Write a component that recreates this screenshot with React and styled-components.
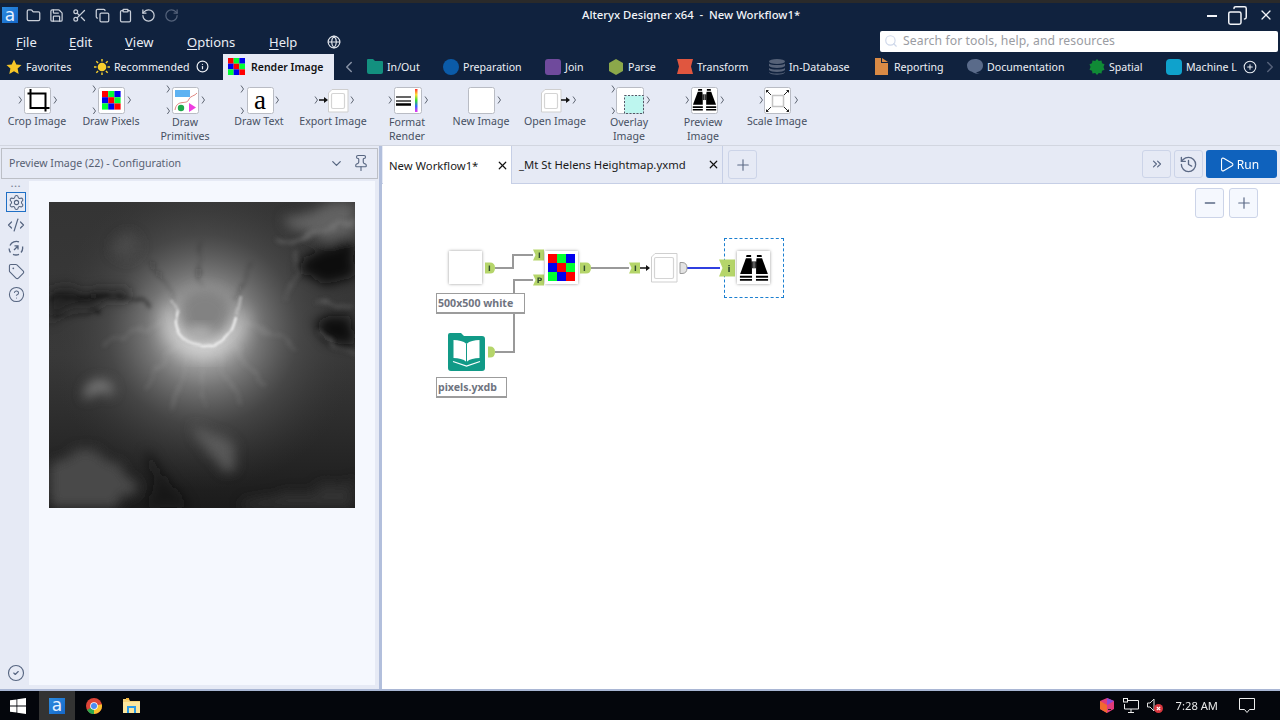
import React from 'react';
import styled, { createGlobalStyle } from 'styled-components';
import {
  Folder, Save, Scissors, Copy, Clipboard, RotateCcw, RotateCw, Globe, Settings, CodeXml, Tag, CircleHelp,
  CircleCheck, Pin, ChevronDown, ChevronsRight, History, Play, Minus, Plus, X, Search, ChevronLeft,
  ChevronRight, CirclePlus, Info,
} from 'lucide-react';

const Global = createGlobalStyle`
  html, body { margin: 0; padding: 0; background: #fff; overflow: hidden; }
  body { font-family: "Noto Sans", "Open Sans", sans-serif; }
  svg { display: block; }
`;

const Page = styled.div`
  width: 1280px; height: 720px; display: flex; flex-direction: column; overflow: hidden; background: #fff;
`;

const Header = styled.header`
  height: 77px; background: #10223e; border-top: 3px solid #2a2a2a; color: #fff; display: flex; flex-direction: column;
`;
const TitleRow = styled.div`
  height: 24px; position: relative; display: flex; align-items: center; padding-left: 2px;
`;
const AppLogo = styled.div`
  width: 16px; height: 16px; background: linear-gradient(135deg, #2c8be0, #1567c8);
  color: #e8f2ff; font: 400 17px/14px "DejaVu Sans", sans-serif;
  display: flex; align-items: center; justify-content: center; flex: none; padding-bottom: 1px; box-sizing: border-box;
`;
const QuickIcons = styled.div`
  display: flex; margin-left: 4px;
`;
const QuickIcon = styled.span`
  width: 23px; display: flex; justify-content: center; color: ${p => (p.$dim ? '#54627a' : '#c9cfd9')};
`;
const Title = styled.div`
  position: absolute; left: 582px; top: 3px; font-size: 11.3px; font-weight: 500; line-height: 17px; white-space: pre; color: #f2f4f8;
`;
const WinControls = styled.div`
  margin-left: auto; display: flex; align-items: center; color: #f2f4f8; padding-right: 6px; gap: 10px;
`;
const MinDash = styled.span`
  width: 10px; height: 2px; background: #f2f4f8; margin-top: 2px;
`;
const MenuRow = styled.div`
  height: 27px; display: flex; align-items: center; position: relative;
`;
const MenuItem = styled.span`
  position: absolute; left: ${p => p.$x}px; top: 6px; font-size: 13px; line-height: 18px; color: #e9edf4;
  u { text-underline-offset: 2px; text-decoration-thickness: 1px; }
`;
const GlobeSlot = styled.span`
  position: absolute; left: 327px; top: 8px; color: #dfe3ea;
`;
const SearchBox = styled.div`
  position: absolute; left: 880px; top: 4px; width: 398px; height: 21px; background: #fff; border-radius: 2px;
  display: flex; align-items: center; padding: 0 0 2px 4px; box-sizing: border-box; gap: 5px; color: #cfd8ea;
`;
const SearchText = styled.span`
  font-size: 12.2px; color: #9a9ca2; letter-spacing: .1px; white-space: nowrap;
`;
const CatRow = styled.nav`
  height: 26px; display: flex; align-items: stretch; position: relative;
`;
const Cat = styled.div`
  width: ${p => p.$w}px; flex: none; display: flex; align-items: center; gap: ${p => p.$gap || 4}px; font-size: 10.6px; color: #eef1f6; white-space: nowrap; overflow: hidden;
  padding: 0 0 1px ${p => p.$pl || 0}px; box-sizing: border-box;
`;
const CatActive = styled(Cat)`
  background: #e6eaf5; color: #111; font-weight: 600; font-size: 10.5px; gap: 6px;
`;
const CatArrow = styled.div`
  width: ${p => p.$w}px; flex: none; display: flex; align-items: center; justify-content: center; color: ${p => p.$c || '#8893a6'};
`;

const Ribbon = styled.div`
  height: 66px; background: #e6eaf5; display: grid; grid-template-columns: repeat(11, 74px); border-bottom: 1px solid #d2d6e0; box-sizing: border-box; flex: none;
`;
const Tool = styled.div`
  display: flex; flex-direction: column; align-items: center; padding-top: 4px;
`;
const ToolLabel = styled.div`
  font-size: 10.6px; line-height: 14px; color: #465062; text-align: center; white-space: pre-line;
  margin-top: ${p => (p.$two ? 1 : 0)}px;
`;

const Main = styled.main`
  flex: 1; display: flex; min-height: 0;
`;
const ConfigPane = styled.section`
  width: 378px; flex: none; background: #e6eaf5; display: flex; flex-direction: column; padding-top: 2px; box-sizing: border-box;
`;
const ConfigHead = styled.div`
  height: 31px; margin: 0 0 0 1px; border: 1px solid #bcbfc6; box-sizing: border-box; display: flex; align-items: center;
  padding: 0 7px 1px 7px; font-size: 10.6px; color: #566072;
`;
const HeadTitle = styled.span`
  flex: 1;
`;
const HeadBtn = styled.span`
  display: flex; color: #566580; margin-left: ${p => p.$ml || 0}px;
`;
const ConfigBody = styled.div`
  flex: 1; display: flex; margin: 2px 3px 4px 3px; min-height: 0;
`;
const SideRail = styled.div`
  width: 26px; flex: none; display: flex; flex-direction: column; align-items: center; color: #566580;
`;
const Dots = styled.div`
  height: 11px; line-height: 5px; font-size: 9px; letter-spacing: 1px; color: #7b8597; font-weight: 700;
`;
const RailBtn = styled.div`
  width: 20px; height: 20px; box-sizing: border-box; display: flex; align-items: center; justify-content: center;
  margin-bottom: 3px; border: 1px solid ${p => (p.$on ? '#1f6fc5' : 'transparent')};
`;
const RailBottom = styled.div`
  margin-top: auto; margin-bottom: 3px;
`;
const ConfigCanvas = styled.div`
  flex: 1; background: #f5f8fe; padding: 21px 0 0 20px;
`;
const Splitter = styled.div`
  width: 4px; flex: none; background: #b2bfdc; border-left: 1px solid #e6eaf5; box-sizing: border-box;
`;
const WorkArea = styled.section`
  flex: 1; display: flex; flex-direction: column; min-width: 0;
`;
const TabStrip = styled.div`
  height: 38px; flex: none; background: #e6eaf5; display: flex; border-bottom: 1px solid #c6cfe6; box-sizing: border-box; padding-left: 1px;
`;
const DocTab = styled.div`
  width: ${p => p.$w}px; flex: none; box-sizing: border-box; display: flex; align-items: center; padding: 0 2px 0 ${p => p.$pl}px;
  background: ${p => (p.$on ? '#fff' : '#e6eaf5')}; font-size: 11.3px; color: #1a1a1a; margin-bottom: ${p => (p.$on ? -1 : 0)}px;
  border-right: 1px solid #c6cfe6;
`;
const TabName = styled.span`
  flex: 1; white-space: nowrap;
`;
const SquareBtn = styled.div`
  width: 29px; height: ${p => p.$h || 29}px; box-sizing: border-box; flex: none; border: 1px solid #ccd4e8; border-radius: 3px;
  display: flex; align-items: center; justify-content: center; color: #5b6985; background: ${p => p.$bg || 'transparent'};
`;
const PlusWrap = styled.div`
  margin: 4px 0 0 5px;
`;
const StripRight = styled.div`
  margin-left: auto; display: flex; gap: 3px; padding: 4px 3px 0 0;
`;
const RunBtn = styled.div`
  width: 71px; height: 28px; background: #0f62bd; border-radius: 3px; color: #fff; display: flex; align-items: center; justify-content: center;
  gap: 2px; font-size: 12px; padding-right: 6px; box-sizing: border-box;
`;
const Canvas = styled.div`
  flex: 1; position: relative; background: #fff; overflow: hidden;
`;
const ZoomBar = styled.div`
  position: absolute; right: 22px; top: 4px; display: flex; gap: 5px;
`;
const Wires = styled.svg`
  position: absolute; left: 0; top: 0;
`;
const NodeBox = styled.div`
  position: absolute; left: ${p => p.$x - 382}px; top: ${p => p.$y - 184}px; width: 33px; height: 33px; box-sizing: border-box;
  background: #fff; box-shadow: 0 0 3px rgba(0,0,0,.4); display: flex; align-items: center; justify-content: center;
`;
const BookSlot = styled.div`
  position: absolute; left: 66px; top: 149px;
`;
const NodeLabel = styled.div`
  position: absolute; left: ${p => p.$x - 382}px; top: ${p => p.$y - 184}px; width: ${p => p.$w}px; height: 21px; box-sizing: border-box;
  border: 1px solid #9c9c9c; border-bottom-width: 2px; font-size: 10.6px; font-weight: 700; color: #6f7480; padding: 1px 0 0 1px; line-height: 16px; background: #fff; white-space: nowrap;
`;
const Selection = styled.div`
  position: absolute; left: 342px; top: 54px; width: 60px; height: 60px; box-sizing: border-box; border: 1px dashed #1c7fd0;
`;
const Taskbar = styled.footer`
  height: 31px; flex: none; background: #04060c; border-top: 2px solid #a9b6d4; box-sizing: border-box; display: flex; align-items: stretch; color: #eee; padding-left: 10px;
`;
const TaskSlot = styled.div`
  width: ${p => p.$w}px; flex: none; display: flex; align-items: center; justify-content: center; background: ${p => p.$bg || 'transparent'};
  margin-left: ${p => p.$ml || 0}px;
`;
const Tray = styled.div`
  margin-left: auto; display: flex; align-items: center; padding-right: 25px;
`;
const TrayIcon = styled.span`
  display: flex; margin-right: ${p => p.$mr}px;
`;
const Clock = styled.span`
  font-size: 11.2px; color: #e8e8e8; margin-right: 21px; white-space: nowrap;
`;

const Chev = ({ x, y }) => <path d={`M${x} ${y - 3.5}l2.5 3.5l-2.5 3.5`} fill="none" stroke="#5f6673" strokeWidth="1" />;
const IBox = ({ x = 24, w = 26 }) => <rect x={x + .5} y="3.5" width={w} height="26" rx="2" fill="#fff" stroke="#b9bcc4" />;

const PixelGrid = ({ x, y, c }) => {
  const colors = ['#f00', '#0f3', '#00e', '#00e', '#f00', '#0f3', '#0f3', '#00e', '#f00'];
  return <g>{colors.map((f, i) => <rect key={i} x={x + (i % 3) * c} y={y + Math.floor(i / 3) * c} width={c} height={c} fill={f} />)}</g>;
};
const Binoculars = ({ x = 0, y = 0, s = 1 }) => (
  <g transform={`translate(${x} ${y}) scale(${s})`} fill="#000">
    <path d="M6.500 0H10.500V1.800H6.200zM15.500 0H19.500L19.800 1.800H15.500z" />
    <path d="M6 2.800H10.800L11.200 6.500V16.500H1z" />
    <path d="M20 2.800H15.200L14.800 6.500V16.500H25z" />
    <path d="M11.200 5.500H14.800V11.500H11.200z" fill="#333" />
    <path d="M12.700 5.500h.6v6h-.6z" fill="#aaa" />
    <path d="M.8 18h10.500v1.800H.8zM14.700 18h10.500v1.800H14.700z" />
    <path d="M.8 20.800h10.500v1.500H.8zM14.700 20.800h10.500v1.500H14.700z" />
  </g>
);
const PageDoc = ({ x, y, w, h, stroke = '#cfcfcf' }) => (
  <g>
    <path d={`M${x + 4} ${y + .5}H${x + w}V${y + h}H${x + .5}V${y + 4}z`} fill="#fff" stroke={stroke} />
    <rect x={x + 3.500} y={y + 4.500} width={w - 7} height={h - 8} rx="1.500" fill="#fff" stroke="#d4d4d4" strokeWidth="1.200" />
  </g>
);
const Arrow = ({ x, y, w = 9, c = '#111' }) => <path d={`M${x} ${y - .8}h${w - 4}v-2.200l4 3l-4 3v-2.200h-${w - 4}z`} fill={c} />;

const tools = [
  { label: 'Crop Image', art: <><Chev x={19} y={16} /><Chev x={54} y={16} /><IBox /><path d="M31 5.500v19h19M28 10h18v18" fill="none" stroke="#000" strokeWidth="2" transform="translate(-.5 -.5)" /></> },
  { label: 'Draw Pixels', art: <><Chev x={19} y={5} /><Chev x={19} y={27} /><Chev x={54} y={16} /><IBox /><PixelGrid x={28} y={7} c={6.200} /></> },
  { label: 'Draw\nPrimitives', two: true, art: <><Chev x={19} y={5} /><Chev x={19} y={27} /><Chev x={54} y={16} /><IBox /><rect x="27" y="6" width="15" height="7" fill="#5eb2f2" /><path d="M27 26c2-12 12-4 14-11c1-3 6-3 8-6" fill="none" stroke="#e0857f" strokeWidth="1" /><circle cx="33" cy="24" r="3.200" fill="#1fa84a" /><path d="M41 19l7 4.500l-7 4.500z" fill="#ee3de0" /></> },
  { label: 'Draw Text', art: <><Chev x={19} y={5} /><Chev x={19} y={27} /><Chev x={54} y={16} /><IBox x={25} /><text x="38" y="25" textAnchor="middle" fontFamily="Liberation Serif, serif" fontSize="27" fill="#000">a</text></> },
  { label: 'Export Image', art: <><Chev x={19} y={16} /><Arrow x={23} y={16} /><PageDoc x={32} y={5} w={20} h={23} /><Chev x={55} y={16} /></> },
  { label: 'Format\nRender', two: true, art: <><Chev x={19} y={16} /><Chev x={55} y={16} /><IBox w={27} /><path d="M26 13h15M26 17h15" stroke="#333" strokeWidth="1.500" /><path d="M26 20.500h15" stroke="#000" strokeWidth="2.500" /><defs><linearGradient id="rb" x1="0" y1="0" x2="0" y2="1"><stop offset="0" stopColor="#f33" /><stop offset=".25" stopColor="#fd3" /><stop offset=".5" stopColor="#3d3" /><stop offset=".75" stopColor="#36f" /><stop offset="1" stopColor="#e3e" /></linearGradient></defs><rect x="45" y="5" width="2.500" height="23" fill="url(#rb)" /></> },
  { label: 'New Image', art: <><IBox /><Chev x={54} y={16} /></> },
  { label: 'Open Image', art: <><PageDoc x={23} y={5} w={20} h={23} /><Arrow x={43} y={16} /><Chev x={55} y={16} /></> },
  { label: 'Overlay\nImage', two: true, art: <><Chev x={20} y={5} /><Chev x={20} y={27} /><IBox w={27} /><rect x="32.500" y="11.500" width="19" height="18" fill="#bdf6ef" stroke="#556" strokeDasharray="2 1.500" /><Chev x={55} y={16} /></> },
  { label: 'Preview\nImage', two: true, art: <><Chev x={20} y={16} /><IBox x={25} /><Binoculars x={26} y={5} s={.96} /><Chev x={55} y={16} /></> },
  { label: 'Scale Image', art: <><Chev x={20} y={16} /><IBox /><rect x="32.500" y="11.500" width="11" height="11" fill="#fff" stroke="#c4c4c4" strokeWidth="1.500" /><path d="M26 6l5 5M49 6l-5 5M26 28l5-5M49 28l-5-5" stroke="#222" strokeWidth="1" /><path d="M26 6h3l-3 3zM49 6h-3l3 3zM26 28h3l-3-3zM49 28h-3l3-3z" fill="#222" /><Chev x={55} y={16} /></> },
];

const ToolGlyph = ({ children }) => <svg width="74" height="30" viewBox="0 0 74 30">{children}</svg>;

const Heightmap = () => (
  <svg width="306" height="306" viewBox="0 0 306 306">
    <defs>
      <filter id="terrain" x="0" y="0" width="306" height="306" filterUnits="userSpaceOnUse">
        <feTurbulence type="fractalNoise" baseFrequency="0.03" numOctaves="4" seed="11" result="n" />
        <feDisplacementMap in="SourceGraphic" in2="n" scale="30" xChannelSelector="R" yChannelSelector="G" />
        <feGaussianBlur stdDeviation="6" />
      </filter>
      <filter id="ridge" x="0" y="0" width="306" height="306" filterUnits="userSpaceOnUse">
        <feTurbulence type="fractalNoise" baseFrequency="0.05" numOctaves="3" seed="3" result="n" />
        <feDisplacementMap in="SourceGraphic" in2="n" scale="16" xChannelSelector="R" yChannelSelector="G" />
        <feGaussianBlur stdDeviation="2" />
      </filter>
      <filter id="fine" x="0" y="0" width="306" height="306" filterUnits="userSpaceOnUse">
        <feTurbulence type="fractalNoise" baseFrequency="0.03" numOctaves="2" seed="5" result="n" />
        <feDisplacementMap in="SourceGraphic" in2="n" scale="5" xChannelSelector="R" yChannelSelector="G" />
        <feGaussianBlur stdDeviation="1.100" />
      </filter>
      <filter id="b5" x="-40%" y="-40%" width="180%" height="180%"><feGaussianBlur stdDeviation="6" /></filter>
      <filter id="b9" x="-40%" y="-40%" width="180%" height="180%"><feGaussianBlur stdDeviation="9" /></filter>
      <linearGradient id="base" x1="0" y1="0" x2="0" y2="1">
        <stop offset="0" stopColor="#343434" /><stop offset=".5" stopColor="#393939" /><stop offset=".78" stopColor="#292929" /><stop offset="1" stopColor="#1b1b1b" />
      </linearGradient>
      <radialGradient id="glow" cx="154" cy="128" r="160" gradientUnits="userSpaceOnUse">
        <stop offset="0" stopColor="#d6d6d6" /><stop offset=".18" stopColor="#a8a8a8" /><stop offset=".36" stopColor="#747474" /><stop offset=".6" stopColor="#4c4c4c" stopOpacity=".75" /><stop offset="1" stopColor="#333" stopOpacity="0" />
      </radialGradient>
    </defs>
    <rect width="306" height="306" fill="url(#base)" />
    <circle cx="154" cy="128" r="160" fill="url(#glow)" />
    <g filter="url(#terrain)">
      <path d="M240 20c20-15 40-24 66-26v40c-24 2-44 8-66-14z" fill="#626262" />
      <path d="M250 68c18-20 36-26 60-30v34c-18 12-34 16-46 12z" fill="#0c0c0c" />
      <path d="M275 112c10-4 22-6 35-4v30c-12 2-26 2-35-2z" fill="#0e0e0e" />
      <path d="M-8 88c30-4 60-6 92 4c-22 6-60 26-92 26z" fill="#202020" opacity=".85" />
      <circle cx="78" cy="40" r="12" fill="#484848" />
      <path d="M38 192c8-15 24-16 30-10c0 8-14 18-30 16z" fill="#7a7a7a" />
      <ellipse cx="36" cy="282" rx="44" ry="28" fill="#484848" />
      <path d="M145 215c18 10 36 28 45 50c-8 8-18 6-26-6c-9-14-18-28-19-44z" fill="#626262" opacity=".8" />
      <path d="M190 310c4-14 20-20 40-18c30 0 50-6 80-14v32z" fill="#333" />
      <path d="M100 250c14 18 34 40 50 60h-50z" fill="#111" opacity=".6" />
    </g>
    <g filter="url(#ridge)" fill="none">
      <path d="M226 38c16 6 30 2 44-8c12-6 24-10 36-10" stroke="#7c7c7c" strokeWidth="3" opacity=".6" />
      <path d="M248 52c2 18-6 30-12 44M304 104c-14-2-26-6-36-2M270 130c10 10 24 16 36 22" stroke="#6c6c6c" strokeWidth="2.500" opacity=".6" />
      <path d="M0 98c24-6 44-2 62-6c14-2 28 2 38 12" stroke="#131313" strokeWidth="2.500" opacity=".75" />
      <path d="M4 116c16 0 28-6 46-6" stroke="#191919" strokeWidth="2" opacity=".6" />
      <path d="M154 146v60M128 142l-30 44M182 142l34 44M112 120l-56 20M196 120l54 24M138 148l-16 60M170 148l18 56" stroke="#bcbcbc" strokeWidth="3" opacity=".16" />
      <path d="M150 40v48M204 62l-20 34M100 60l26 38" stroke="#272727" strokeWidth="1.500" opacity=".35" />
    </g>
    <ellipse cx="156" cy="112" rx="28" ry="26" fill="#828282" filter="url(#b5)" />
    <path d="M122 106c-7 22 6 40 32 42c22 1 35-16 40-36" fill="none" stroke="#fff" strokeWidth="13" opacity=".5" filter="url(#b9)" />
    <g filter="url(#fine)">
      <path d="M128 108c-7 18 4 34 26 36c20 1 30-12 33-30" fill="none" stroke="#f0f0f0" strokeWidth="2.400" />
      <path d="M122 98l7 12" stroke="#c8c8c8" strokeWidth="3" opacity=".6" />
      <path d="M192 94l-4 18" stroke="#c8c8c8" strokeWidth="3" opacity=".6" />
    </g>
    <ellipse cx="151" cy="131" rx="14" ry="7" fill="#b0b0b0" filter="url(#b5)" />
  </svg>
);

const BookIcon = () => (
  <svg width="37" height="38" viewBox="0 0 37 38">
    <path d="M2 0h11l3 3h18q3 0 3 3v29q0 3-3 3H3q-3 0-3-3V2q0-2 2-2z" fill="#119a87" />
    <path d="M18.500 11c-3-3-8-4-13-4v18c5 0 10 1 13 4c3-3 8-4 13-4V7c-5 0-10 1-13 4z" fill="#fff" />
    <path d="M18.500 11v18" stroke="#119a87" strokeWidth="1" fill="none" />
    <path d="M5 28.500l13.500 4.500l13.500-4.500" stroke="#fff" strokeWidth="1.200" fill="none" />
  </svg>
);

const WireLayer = () => {
  const o = (x, y) => `${x - 382} ${y - 184}`;
  const inA = (x, y, t) => (
    <g>
      <path d={`M${x - 382} ${y - 184 - 5.500}h11v11h-11l2.500-5.500z`} fill="#b5d56a" />
      <text x={x - 382 + 6.500} y={y - 184 + 3} fontSize="7.500" fontWeight="700" textAnchor="middle" fontFamily="DejaVu Sans" fill="#2e4a2e">{t}</text>
    </g>
  );
  const outA = (x, y, t, total = 10, f = '#b5d56a') => (
    <g>
      <path d={`M${x - 382} ${y - 184 - 5.500}h${total - 5}q5 0 5 5.500t-5 5.500h-${total - 5}z`} fill={f} stroke={f === '#b5d56a' ? 'none' : '#9a9a9a'} />
      {t && <text x={x - 382 + 4.500} y={y - 184 + 3} fontSize="7.500" fontWeight="700" textAnchor="middle" fontFamily="DejaVu Sans" fill="#2e4a2e">{t}</text>}
    </g>
  );
  return (
    <Wires width="898" height="505" viewBox="0 0 898 505">
      <path d={`M${o(495, 268)}H${513 - 382}V${255 - 184}H${533 - 382}`} fill="none" stroke="#999" strokeWidth="2" />
      <path d={`M${o(495, 352)}H${514 - 382}V${280 - 184}H${533 - 382}`} fill="none" stroke="#999" strokeWidth="2" />
      <path d={`M${o(591, 268)}H${629 - 382}`} fill="none" stroke="#999" strokeWidth="2" />
      <path d={`M${o(687, 268)}H${720 - 382}`} fill="none" stroke="#2f3fe0" strokeWidth="2" />
      {outA(485, 268, 'I')}
      {outA(488, 352, '', 7)}
      {inA(533, 255, 'I')}
      {inA(533, 280, 'P')}
      {outA(580, 268, 'I', 11)}
      {inA(629, 268, 'I')}
      <g transform="translate(258 84)"><Arrow x={0} y={0} w={10} /></g>
      <g transform="translate(269 69)"><PageDoc x={0} y={0} w={26} h={29} /></g>
      {outA(680, 268, '', 7, '#e3e3e3')}
      <g>
        <path d="M337 75.500h16v17h-16l3.500-8.500z" fill="#b5d56a" />
        <text x="347" y="88" fontSize="9" fontWeight="700" textAnchor="middle" fontFamily="DejaVu Sans" fill="#2e4a2e">i</text>
      </g>
    </Wires>
  );
};

const Taskfolder = () => (
  <svg width="17" height="15" viewBox="0 0 17 15">
    <path d="M0 1h6l1 2h10v12H0z" fill="#f5d27a" />
    <path d="M0 4h17v11H0z" fill="#fbe59c" />
    <path d="M6 15v-5h5v5h2V8H4v7z" fill="#2a9be8" />
    <path d="M3 0h3v2H3z" fill="#f5b942" />
  </svg>
);

export default function App() {
  return (
    <Page>
      <Global />
      <Header>
        <TitleRow>
          <AppLogo>a</AppLogo>
          <QuickIcons>
            <QuickIcon><Folder size={15} /></QuickIcon>
            <QuickIcon><Save size={15} /></QuickIcon>
            <QuickIcon><Scissors size={15} /></QuickIcon>
            <QuickIcon><Copy size={15} /></QuickIcon>
            <QuickIcon><Clipboard size={15} /></QuickIcon>
            <QuickIcon><RotateCcw size={15} /></QuickIcon>
            <QuickIcon $dim><RotateCw size={15} /></QuickIcon>
          </QuickIcons>
          <Title>Alteryx Designer x64  -  New Workflow1*</Title>
          <WinControls>
            <MinDash />
            <Copy size={21} strokeWidth={1.700} style={{ transform: 'scaleX(-1)' }} />
            <X size={16} strokeWidth={1.800} />
          </WinControls>
        </TitleRow>
        <MenuRow>
          <MenuItem $x={16}><u>F</u>ile</MenuItem>
          <MenuItem $x={69}><u>E</u>dit</MenuItem>
          <MenuItem $x={125}><u>V</u>iew</MenuItem>
          <MenuItem $x={187}><u>O</u>ptions</MenuItem>
          <MenuItem $x={269}><u>H</u>elp</MenuItem>
          <GlobeSlot><Globe size={14} /></GlobeSlot>
          <SearchBox><Search size={14} /><SearchText>Search for tools, help, and resources</SearchText></SearchBox>
        </MenuRow>
        <CatRow>
          <Cat $w={94} $pl={6}>
            <svg width="16" height="16" viewBox="0 0 16 16"><path d="M8 .5l2.300 5 5.200.6-3.900 3.500 1.100 5.300L8 12.200l-4.700 2.700 1.100-5.300L.5 6.100l5.200-.6z" fill="#f7c627" /></svg>
            Favorites
          </Cat>
          <Cat $w={129}>
            <svg width="16" height="16" viewBox="0 0 16 16"><circle cx="8" cy="8" r="4.300" fill="#f8cf2e" /><path d="M8 0v2.500M8 13.500V16M0 8h2.500M13.500 8H16M2.300 2.300l1.800 1.800M11.900 11.900l1.800 1.800M2.300 13.700l1.800-1.800M11.900 4.100l1.800-1.800" stroke="#f8cf2e" strokeWidth="1.400" /></svg>
            Recommended
            <Info size={13} strokeWidth={2.200} style={{ marginLeft: 3, flex: 'none' }} />
          </Cat>
          <CatActive $w={111} $pl={5}>
            <svg width="17" height="17" viewBox="0 0 17 17"><PixelGrid x={0} y={0} c={5.670} /></svg>
            Render Image
          </CatActive>
          <CatArrow $w={29}><ChevronLeft size={18} /></CatArrow>
          <Cat $w={80} $pl={4}>
            <svg width="16" height="15" viewBox="0 0 16 15"><path d="M1 0h5l2 2h7q1 0 1 1v10q0 2-2 2H2q-2 0-2-2V1q0-1 1-1z" fill="#13907f" /></svg>
            In/Out
          </Cat>
          <Cat $w={102}>
            <svg width="16" height="16" viewBox="0 0 16 16"><circle cx="8" cy="8" r="8" fill="#0b5ba8" /></svg>
            Preparation
          </Cat>
          <Cat $w={63}>
            <svg width="16" height="16" viewBox="0 0 16 16"><rect width="16" height="16" rx="3" fill="#6f4a9c" /></svg>
            Join
          </Cat>
          <Cat $w={69}>
            <svg width="16" height="16" viewBox="0 0 16 16"><path d="M8 0l7 4v8l-7 4-7-4V4z" fill="#8ba84a" /></svg>
            Parse
          </Cat>
          <Cat $w={92}>
            <svg width="16" height="15" viewBox="0 0 16 15"><path d="M0 0h16l-2 7.500 2 7.500H0l2-7.500z" fill="#e0563f" /></svg>
            Transform
          </Cat>
          <Cat $w={106}>
            <svg width="16" height="16" viewBox="0 0 16 16" fill="#566278"><ellipse cx="8" cy="2.500" rx="8" ry="2.500" /><path d="M0 4.500c2 2 14 2 16 0V7c-2 2.500-14 2.500-16 0zM0 9c2 2 14 2 16 0v2c-2 2.500-14 2.500-16 0zM0 13c2 2 14 2 16 0v.5c-2 3-14 3-16 0z" /></svg>
            In-Database
          </Cat>
          <Cat $w={92} $gap={6}>
            <svg width="13" height="17" viewBox="0 0 13 17"><path d="M0 0h6v5h7v12H0z" fill="#d98a45" /><path d="M7 0l6 4H7z" fill="#d98a45" /></svg>
            Reporting
          </Cat>
          <Cat $w={122}>
            <svg width="16" height="15" viewBox="0 0 16 15"><path d="M8 0c5 0 8 2.500 8 6.500S13 13 9 13c1 1 3 2 4 2c-3 0-6-1-8-2.300C2 12 0 10 0 6.500S3 0 8 0z" fill="#5a6b8a" /></svg>
            Documentation
          </Cat>
          <Cat $w={77}>
            <svg width="16" height="16" viewBox="0 0 16 16"><path d="M8 0l1.800 2 2.700-.5.500 2.700 2.500 1L14.500 8l1 2.800-2.500 1-.5 2.700-2.700-.5L8 16l-1.800-2-2.700.5-.5-2.700-2.500-1L1.500 8l-1-2.800 2.500-1 .5-2.700 2.700.5z" fill="#108a36" /></svg>
            Spatial
          </Cat>
          <Cat $w={74}>
            <svg width="16" height="16" viewBox="0 0 16 16"><rect width="16" height="16" rx="4" fill="#0fa2cc" /></svg>
            Machine L
          </Cat>
          <CatArrow $w={19} $c="#e8ecf2"><CirclePlus size={14} strokeWidth={1.800} /></CatArrow>
          <CatArrow $w={22} $c="#56627a"><ChevronRight size={18} /></CatArrow>
        </CatRow>
      </Header>

      <Ribbon>
        {tools.map(t => (
          <Tool key={t.label}>
            <ToolGlyph>{t.art}</ToolGlyph>
            <ToolLabel $two={t.two}>{t.label}</ToolLabel>
          </Tool>
        ))}
      </Ribbon>

      <Main>
        <ConfigPane>
          <ConfigHead>
            <HeadTitle>Preview Image (22) - Configuration</HeadTitle>
            <HeadBtn><ChevronDown size={15} /></HeadBtn>
            <HeadBtn $ml={8}><Pin size={18} strokeWidth={1.500} /></HeadBtn>
          </ConfigHead>
          <ConfigBody>
            <SideRail>
              <Dots>...</Dots>
              <RailBtn $on><Settings size={17} strokeWidth={1.500} /></RailBtn>
              <RailBtn><CodeXml size={18} strokeWidth={1.600} /></RailBtn>
              <RailBtn>
                <svg width="16" height="16" viewBox="0 0 16 16" fill="none" stroke="currentColor" strokeWidth="1.300"><path d="M2 5.500A7 7 0 0 1 11 1.800M14.500 6.500a7 7 0 0 1-1.500 6M11 14.300A7 7 0 0 1 5 14.300M2.500 12.500A7 7 0 0 1 1.100 8.500" /><path d="M6 10l4-4M6.500 5.800H10v3.600" /></svg>
              </RailBtn>
              <RailBtn><Tag size={17} strokeWidth={1.500} /></RailBtn>
              <RailBtn><CircleHelp size={17} strokeWidth={1.500} /></RailBtn>
              <RailBottom><CircleCheck size={18} strokeWidth={1.500} /></RailBottom>
            </SideRail>
            <ConfigCanvas><Heightmap /></ConfigCanvas>
          </ConfigBody>
        </ConfigPane>
        <Splitter />
        <WorkArea>
          <TabStrip>
            <DocTab $on $w={129} $pl={6}><TabName>New Workflow1*</TabName><X size={13} color="#111" strokeWidth={2.200} /></DocTab>
            <DocTab $w={211} $pl={7}><TabName>_Mt St Helens Heightmap.yxmd</TabName><X size={13} color="#111" strokeWidth={2.200} /></DocTab>
            <PlusWrap><SquareBtn><Plus size={18} strokeWidth={1.500} /></SquareBtn></PlusWrap>
            <StripRight>
              <SquareBtn $h={28}><ChevronsRight size={14} /></SquareBtn>
              <SquareBtn $h={28}><History size={19} strokeWidth={1.700} /></SquareBtn>
              <RunBtn><Play size={17} strokeWidth={1.500} />Run</RunBtn>
            </StripRight>
          </TabStrip>
          <Canvas>
            <ZoomBar>
              <SquareBtn $h={30} $bg="#f5f8fe"><Minus size={16} strokeWidth={2} /></SquareBtn>
              <SquareBtn $h={30} $bg="#f5f8fe"><Plus size={18} strokeWidth={1.600} /></SquareBtn>
            </ZoomBar>
            <Selection />
            <WireLayer />
            <NodeBox $x={449} $y={251} />
            <NodeBox $x={545} $y={251}>
              <svg width="27" height="27" viewBox="0 0 27 27"><PixelGrid x={0} y={0} c={9} /></svg>
            </NodeBox>
            <NodeBox $x={737} $y={251}>
              <svg width="30" height="26" viewBox="0 0 26 22.500"><Binoculars /></svg>
            </NodeBox>
            <NodeLabel $x={436} $y={293} $w={89}>500x500 white</NodeLabel>
            <NodeLabel $x={436} $y={377} $w={71}>pixels.yxdb</NodeLabel>
            <BookSlot><BookIcon /></BookSlot>
          </Canvas>
        </WorkArea>
      </Main>

      <Taskbar>
        <TaskSlot $w={16}>
          <svg width="16" height="16" viewBox="0 0 16 16" fill="#fff"><path d="M0 2.300l6.500-.9v6.200H0zM7.300 1.300L16 0v7.600H7.300zM0 8.400h6.500v6.200L0 13.700zM7.300 8.400H16V16l-8.700-1.200z" /></svg>
        </TaskSlot>
        <TaskSlot $w={36} $ml={13} $bg="#333"><AppLogo>a</AppLogo></TaskSlot>
        <TaskSlot $w={37}>
          <svg width="16" height="16" viewBox="0 0 16 16"><circle cx="8" cy="8" r="8" fill="#dd4438" /><path d="M8 8L1 12a8 8 0 0 0 8 4z" fill="#2da94f" /><path d="M8 8l7.800-1.700A8 8 0 0 1 8 16z" fill="#fbc02d" /><circle cx="8" cy="8" r="3.800" fill="#fff" /><circle cx="8" cy="8" r="3" fill="#4b8bf5" /></svg>
        </TaskSlot>
        <TaskSlot $w={38}><Taskfolder /></TaskSlot>
        <Tray>
          <TrayIcon $mr={9}>
            <svg width="14" height="15" viewBox="0 0 14 15"><path d="M7 0l7 3v8l-7 4-7-4V3z" fill="#e23b7b" /><path d="M0 3l7 4v8l-7-4z" fill="#f26a2e" /><path d="M7 0l7 3-7 4z" fill="#8c4bd6" /><path d="M8 11h3v1H8z" fill="#222" /></svg>
          </TrayIcon>
          <TrayIcon $mr={8}>
            <svg width="16" height="15" viewBox="0 0 16 15" fill="none" stroke="#eee"><path d="M4 2.500h11.500v8.500H1.500V6" /><path d="M8 11v3M5 14.500h6" /><rect x=".5" y=".5" width="4" height="3.500" /></svg>
          </TrayIcon>
          <TrayIcon $mr={13}>
            <svg width="16" height="15" viewBox="0 0 16 15"><path d="M.5 5h2.500l4-4v12l-4-4H.5z" fill="none" stroke="#ddd" /><circle cx="11.500" cy="10.500" r="4.500" fill="#d9363e" /><path d="M9.800 8.800l3.400 3.400m0-3.400l-3.400 3.400" stroke="#fff" strokeWidth="1.200" /></svg>
          </TrayIcon>
          <Clock>7:28 AM</Clock>
          <svg width="16" height="15" viewBox="0 0 16 15" fill="none" stroke="#eee"><path d="M.5.500h15v11h-5l-2.500 3-2.500-3h-5z" /></svg>
        </Tray>
      </Taskbar>
    </Page>
  );
}
